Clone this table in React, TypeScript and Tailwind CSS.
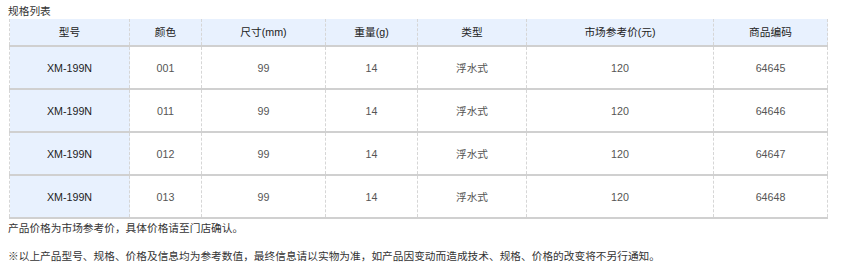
const columns = [
  { label: "型号", width: "w-[120px]" },
  { label: "颜色", width: "w-[72px]" },
  { label: "尺寸(mm)", width: "w-[124px]" },
  { label: "重量(g)", width: "w-[92px]" },
  { label: "类型", width: "w-[109px]" },
  { label: "市场参考价(元)", width: "w-[187px]" },
  { label: "商品编码", width: "w-[114px]" },
];

const rows = [
  ["XM-199N", "001", "99", "14", "浮水式", "120", "64645"],
  ["XM-199N", "011", "99", "14", "浮水式", "120", "64646"],
  ["XM-199N", "012", "99", "14", "浮水式", "120", "64647"],
  ["XM-199N", "013", "99", "14", "浮水式", "120", "64648"],
];

export default function App() {
  return (
    <main
      className="h-[272px] w-[850px] bg-white px-2 pt-[3px] text-[10.7px] leading-[16px] text-[#333]"
      style={{ fontFamily: '"Liberation Sans", "Noto Sans CJK SC", sans-serif' }}
    >
      <p className="h-[16px]">规格列表</p>
      <table className="ml-px w-[818px] table-fixed border-collapse">
        <thead>
          <tr className="h-[27px] bg-[#e8f1fe]">
            {columns.map((c) => (
              <th
                key={c.label}
                className={`${c.width} border-x border-b-2 border-dashed border-x-[#d6d6d6] border-b-[#d0d0d0] p-0 text-center font-normal text-[#222]`}
                style={{ borderBottomStyle: "solid" }}
              >
                {c.label}
              </th>
            ))}
          </tr>
        </thead>
        <tbody>
          {rows.map((row, i) => (
            <tr key={i} className="h-[43px]">
              {row.map((cell, j) => (
                <td
                  key={j}
                  className={
                    j === 0
                      ? "border-x border-b-2 border-dashed border-x-[#d6d6d6] border-b-[#d0d0d0] bg-[#e8f1fe] p-0 text-center text-[#222]"
                      : "border-x border-b-2 border-dashed border-x-[#d6d6d6] border-b-[#d0d0d0] p-0 text-center text-[#555]"
                  }
                  style={{ borderBottomStyle: "solid" }}
                >
                  {cell}
                </td>
              ))}
            </tr>
          ))}
        </tbody>
      </table>
      <p className="mt-px">产品价格为市场参考价，具体价格请至门店确认。</p>
      <p className="mt-[12px]">
        ※以上产品型号、规格、价格及信息均为参考数值，最终信息请以实物为准，如产品因变动而造成技术、规格、价格的改变将不另行通知。
      </p>
    </main>
  );
}
